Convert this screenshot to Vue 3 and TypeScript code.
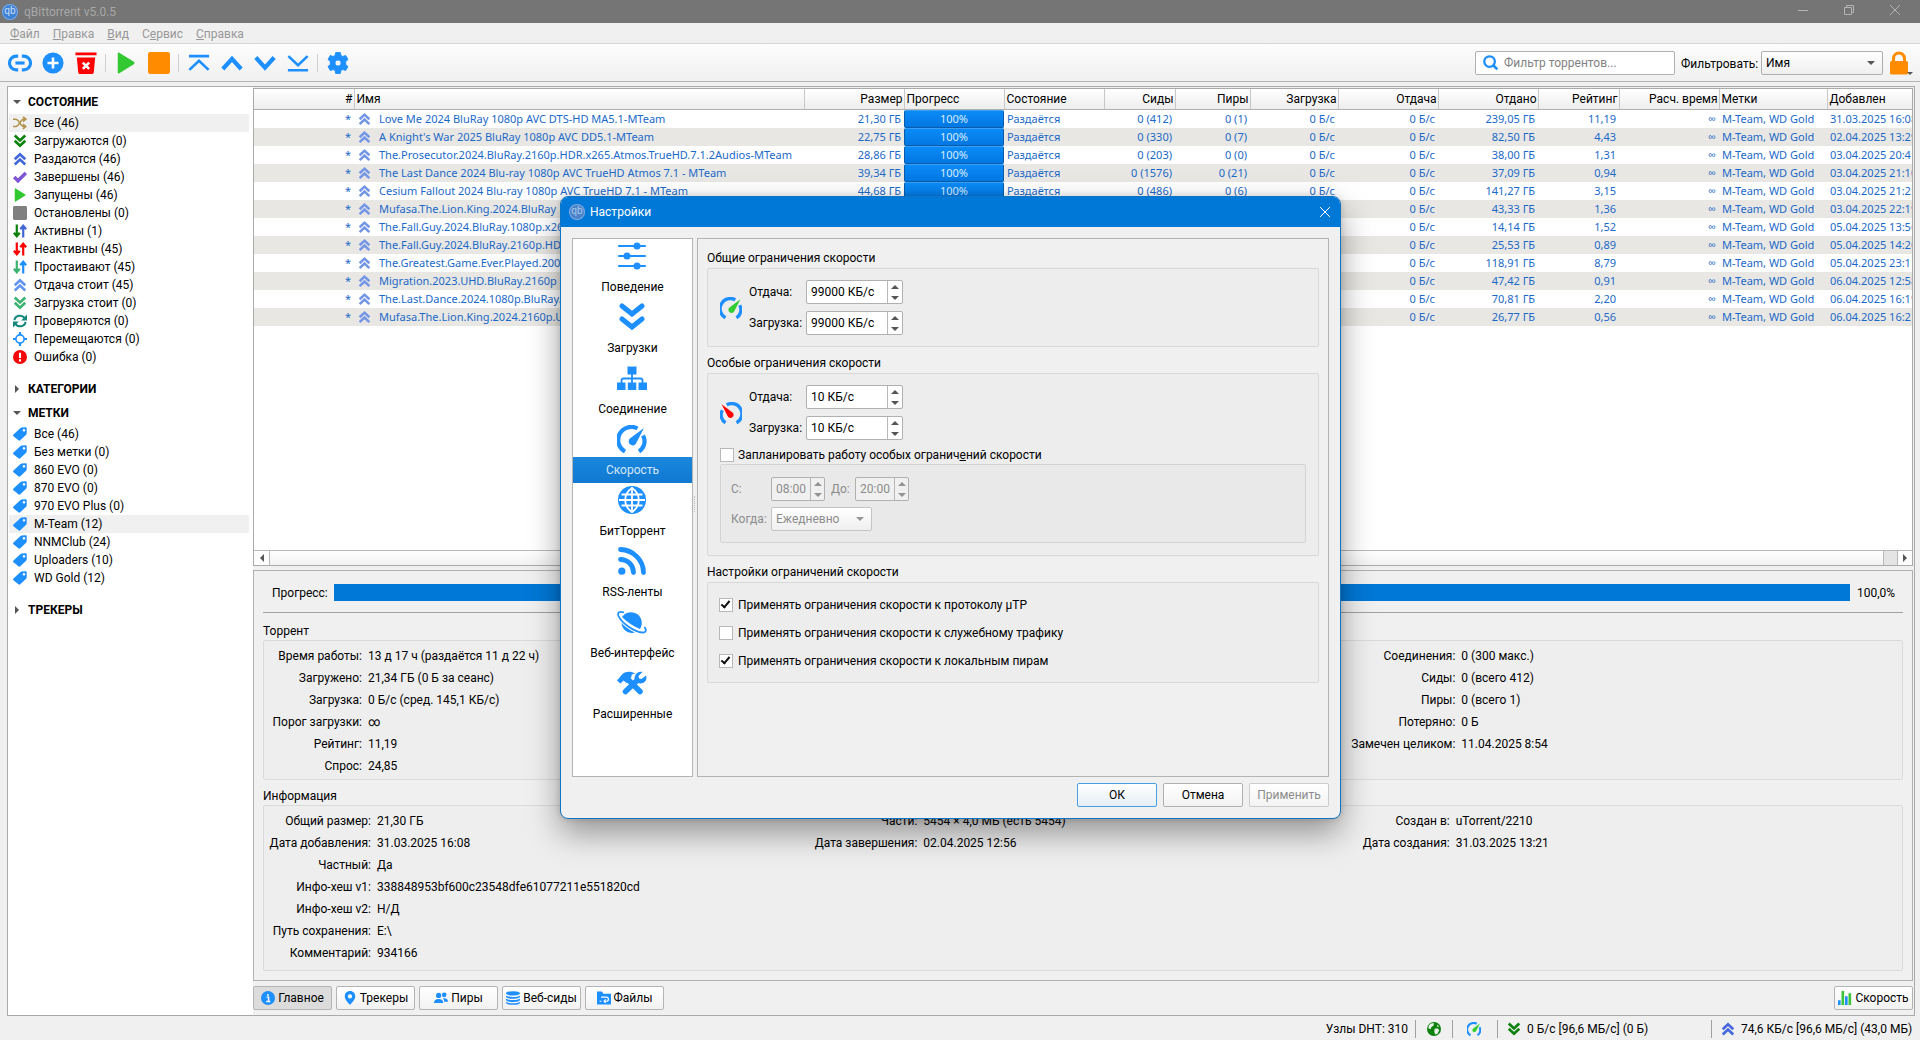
<script setup lang="ts">
import { ref } from 'vue'

interface FilterItem {
  label: string
  icon: string
  color: string
  selected?: boolean
}

interface Torrent {
  name: string
  size: string
  seeds: string
  peers: string
  uploaded: string
  ratio: string
  added: string
}

interface InfoColumn {
  labelWidth: number
  rows: [string, string][]
}

const blue = '#1e8fff'

const statusFilters: FilterItem[] = [
  { label: 'Все (46)', icon: 'shuffle', color: '#b3924b', selected: true },
  { label: 'Загружаются (0)', icon: 'dbl-down', color: '#0c810c' },
  { label: 'Раздаются (46)', icon: 'dbl-up', color: '#4467d8' },
  { label: 'Завершены (46)', icon: 'check', color: '#7d55d6' },
  { label: 'Запущены (46)', icon: 'play', color: '#32c832' },
  { label: 'Остановлены (0)', icon: 'stop', color: '#808080' },
  { label: 'Активны (1)', icon: 'active', color: '#4467d8' },
  { label: 'Неактивны (45)', icon: 'inactive', color: '#ff0000' },
  { label: 'Простаивают (45)', icon: 'stalled', color: '#1e8fff' },
  { label: 'Отдача стоит (45)', icon: 'dbl-up', color: '#6495ed' },
  { label: 'Загрузка стоит (0)', icon: 'dbl-down', color: '#3cb371' },
  { label: 'Проверяются (0)', icon: 'refresh', color: '#14887c' },
  { label: 'Перемещаются (0)', icon: 'target', color: blue },
  { label: 'Ошибка (0)', icon: 'error', color: '#f20808' },
]

const tagFilters: FilterItem[] = [
  'Все (46)', 'Без метки (0)', '860 EVO (0)', '870 EVO (0)', '970 EVO Plus (0)',
  'M-Team (12)', 'NNMClub (24)', 'Uploaders (10)', 'WD Gold (12)',
].map((label) => ({ label, icon: 'tag', color: blue, selected: label === 'M-Team (12)' }))

const columns = [
  { title: '#', width: 100, right: true },
  { title: 'Имя', width: 450 },
  { title: 'Размер', width: 100, right: true },
  { title: 'Прогресс', width: 100 },
  { title: 'Состояние', width: 100 },
  { title: 'Сиды', width: 71, right: true },
  { title: 'Пиры', width: 75, right: true },
  { title: 'Загрузка', width: 88, right: true },
  { title: 'Отдача', width: 100, right: true },
  { title: 'Отдано', width: 100, right: true },
  { title: 'Рейтинг', width: 81, right: true },
  { title: 'Расч. время', width: 100, right: true },
  { title: 'Метки', width: 108 },
  { title: 'Добавлен', width: 120 },
]

const torrents: Torrent[] = [
  { name: 'Love Me 2024 BluRay 1080p AVC DTS-HD MA5.1-MTeam', size: '21,30 ГБ', seeds: '0 (412)', peers: '0 (1)', uploaded: '239,05 ГБ', ratio: '11,19', added: '31.03.2025 16:08' },
  { name: "A Knight's War 2025 BluRay 1080p AVC DD5.1-MTeam", size: '22,75 ГБ', seeds: '0 (330)', peers: '0 (7)', uploaded: '82,50 ГБ', ratio: '4,43', added: '02.04.2025 13:29' },
  { name: 'The.Prosecutor.2024.BluRay.2160p.HDR.x265.Atmos.TrueHD.7.1.2Audios-MTeam', size: '28,86 ГБ', seeds: '0 (203)', peers: '0 (0)', uploaded: '38,00 ГБ', ratio: '1,31', added: '03.04.2025 20:41' },
  { name: 'The Last Dance 2024 Blu-ray 1080p AVC TrueHD Atmos 7.1 - MTeam', size: '39,34 ГБ', seeds: '0 (1576)', peers: '0 (21)', uploaded: '37,09 ГБ', ratio: '0,94', added: '03.04.2025 21:10' },
  { name: 'Cesium Fallout 2024 Blu-ray 1080p AVC TrueHD 7.1 - MTeam', size: '44,68 ГБ', seeds: '0 (486)', peers: '0 (6)', uploaded: '141,27 ГБ', ratio: '3,15', added: '03.04.2025 21:25' },
  { name: 'Mufasa.The.Lion.King.2024.BluRay', size: '', seeds: '', peers: '', uploaded: '43,33 ГБ', ratio: '1,36', added: '03.04.2025 22:19' },
  { name: 'The.Fall.Guy.2024.BluRay.1080p.x265', size: '', seeds: '', peers: '', uploaded: '14,14 ГБ', ratio: '1,52', added: '05.04.2025 13:56' },
  { name: 'The.Fall.Guy.2024.BluRay.2160p.HDR', size: '', seeds: '', peers: '', uploaded: '25,53 ГБ', ratio: '0,89', added: '05.04.2025 14:26' },
  { name: 'The.Greatest.Game.Ever.Played.2005', size: '', seeds: '', peers: '', uploaded: '118,91 ГБ', ratio: '8,79', added: '05.04.2025 23:11' },
  { name: 'Migration.2023.UHD.BluRay.2160p', size: '', seeds: '', peers: '', uploaded: '47,42 ГБ', ratio: '0,91', added: '06.04.2025 12:58' },
  { name: 'The.Last.Dance.2024.1080p.BluRay.', size: '', seeds: '', peers: '', uploaded: '70,81 ГБ', ratio: '2,20', added: '06.04.2025 16:19' },
  { name: 'Mufasa.The.Lion.King.2024.2160p.UHD', size: '', seeds: '', peers: '', uploaded: '26,77 ГБ', ratio: '0,56', added: '06.04.2025 16:21' },
]

const transferInfo: InfoColumn[] = [
  {
    labelWidth: 88,
    rows: [
      ['Время работы:', '13 д 17 ч (раздаётся 11 д 22 ч)'],
      ['Загружено:', '21,34 ГБ (0 Б за сеанс)'],
      ['Загрузка:', '0 Б/с (сред. 145,1 КБ/с)'],
      ['Порог загрузки:', '∞'],
      ['Рейтинг:', '11,19'],
      ['Спрос:', '24,85'],
    ],
  },
  { labelWidth: 104, rows: [] },
  {
    labelWidth: 102,
    rows: [
      ['Соединения:', '0 (300 макс.)'],
      ['Сиды:', '0 (всего 412)'],
      ['Пиры:', '0 (всего 1)'],
      ['Потеряно:', '0 Б'],
      ['Замечен целиком:', '11.04.2025 8:54'],
    ],
  },
]

const generalInfo: InfoColumn[] = [
  {
    labelWidth: 97,
    rows: [
      ['Общий размер:', '21,30 ГБ'],
      ['Дата добавления:', '31.03.2025 16:08'],
      ['Частный:', 'Да'],
      ['Инфо-хеш v1:', '338848953bf600c23548dfe61077211e551820cd'],
      ['Инфо-хеш v2:', 'Н/Д'],
      ['Путь сохранения:', 'E:\\'],
      ['Комментарий:', '934166'],
    ],
  },
  {
    labelWidth: 97,
    rows: [
      ['Части:', '5454 × 4,0 МБ (есть 5454)'],
      ['Дата завершения:', '02.04.2025 12:56'],
    ],
  },
  {
    labelWidth: 83,
    rows: [
      ['Создан в:', 'uTorrent/2210'],
      ['Дата создания:', '31.03.2025 13:21'],
    ],
  },
]

const detailTabs = [
  { label: 'Главное', icon: 'info' },
  { label: 'Трекеры', icon: 'pin' },
  { label: 'Пиры', icon: 'peers' },
  { label: 'Веб-сиды', icon: 'database' },
  { label: 'Файлы', icon: 'folder' },
]

const pages = [
  { label: 'Поведение', icon: 'sliders' },
  { label: 'Загрузки', icon: 'big-down' },
  { label: 'Соединение', icon: 'network' },
  { label: 'Скорость', icon: 'gauge' },
  { label: 'БитТоррент', icon: 'globe' },
  { label: 'RSS-ленты', icon: 'rss' },
  { label: 'Веб-интерфейс', icon: 'planet' },
  { label: 'Расширенные', icon: 'tools' },
]

const activePage = ref('Скорость')
const activeTab = ref('Главное')

const limits = [
  { id: 'normal', title: 'Общие ограничения скорости', upload: ref('99000 КБ/с'), download: ref('99000 КБ/с') },
  { id: 'alt', title: 'Особые ограничения скорости', upload: ref('10 КБ/с'), download: ref('10 КБ/с') },
]

const scheduled = ref(false)
const applyUtp = ref(true)
const applyOverhead = ref(false)
const applyLan = ref(true)
</script>

<template>
  <div class="app">
    <svg class="sprite" aria-hidden="true">
      <symbol id="dbl-up" viewBox="0 0 24 24"><path d="M3 12.500l9-8.500 9 8.500M3 21.500l9-8.500 9 8.500" fill="none" stroke="currentColor" stroke-width="4.600" /></symbol>
      <symbol id="dbl-down" viewBox="0 0 24 24"><path d="M3 2.500l9 8.500 9-8.500M3 11.500l9 8.500 9-8.500" fill="none" stroke="currentColor" stroke-width="4.600" /></symbol>
      <symbol id="big-down" viewBox="0 0 28 28"><path d="M4 3l10 8 10-8M4 16l10 8 10-8" fill="none" stroke="currentColor" stroke-width="5" stroke-linecap="round" /></symbol>
      <symbol id="shuffle" viewBox="0 0 24 24"><path d="M0 5.500h5c5 0 8 12.500 13 12.500h2M0 18h5c5 0 8-12.500 13-12.500h2M17 1.500l5 4-5 4M17 14l5 4-5 4" fill="none" stroke="currentColor" stroke-width="2.800" /></symbol>
      <symbol id="check" viewBox="0 0 24 24"><path d="M2 12l6.500 6.500L22 5" fill="none" stroke="currentColor" stroke-width="6" /></symbol>
      <symbol id="play" viewBox="0 0 24 24"><path d="M3 1.500c0-1 .8-1.300 1.600-.8l16 10c.9.600.9 2 0 2.600l-16 10c-.8.500-1.600.2-1.600-.8z" fill="currentColor" /></symbol>
      <symbol id="stop" viewBox="0 0 24 24"><rect x="0" y="0" width="24" height="24" rx="2.500" fill="currentColor" /></symbol>
      <symbol id="active" viewBox="0 0 24 24"><path d="M6.500 1v20M1.500 15l5 6 5-6" fill="none" stroke="#0c810c" stroke-width="3.800" /><path d="M17.500 23V3M12.500 9l5-6 5 6" fill="none" stroke="currentColor" stroke-width="3.800" /></symbol>
      <symbol id="inactive" viewBox="0 0 24 24"><path d="M6.500 1v20M1.500 15l5 6 5-6M17.500 23V3M12.500 9l5-6 5 6" fill="none" stroke="currentColor" stroke-width="3.800" /></symbol>
      <symbol id="stalled" viewBox="0 0 24 24"><path d="M6.500 1v20M1.500 15l5 6 5-6" fill="none" stroke="#3cb371" stroke-width="3.800" /><path d="M17.500 23V3M12.500 9l5-6 5 6" fill="none" stroke="currentColor" stroke-width="3.800" /></symbol>
      <symbol id="refresh" viewBox="0 0 24 24"><path d="M2.500 10.500A9.500 8.500 0 0 1 20 7M21.500 13.500A9.500 8.500 0 0 1 4 17" fill="none" stroke="currentColor" stroke-width="3.500" /><path d="M24 1v10h-10zM0 23V13h10z" fill="currentColor" /></symbol>
      <symbol id="target" viewBox="0 0 24 24"><circle cx="12" cy="12" r="7" fill="none" stroke="currentColor" stroke-width="2.800" /><path d="M12 0v5M12 19v5M0 12h5M19 12h5" stroke="currentColor" stroke-width="3.800" /></symbol>
      <symbol id="error" viewBox="0 0 24 24"><circle cx="12" cy="12" r="12" fill="currentColor" /><path d="M12 4.500v9M12 16v3.500" stroke="#fff" stroke-width="3.600" /></symbol>
      <symbol id="tag" viewBox="0 0 24 24"><path d="M23.500 2.500v8c0 1-.4 2-1 2.700L12.500 22.700c-.9.900-2.300.9-3.200 0L.8 16c-.9-.9-.9-2.300 0-3.200L12 2.500C13 1.500 14 1 15 .8L21.500.5c1.200 0 2 .8 2 2zM18.800 3.500a2.200 2.200 0 1 0 .1 0z" fill="currentColor" fill-rule="evenodd" /></symbol>
      <symbol id="link" viewBox="0 0 24 24"><path d="M10 4.500H8a7.500 7.500 0 0 0 0 15h2M14 4.500h2a7.500 7.500 0 0 1 0 15h-2" fill="none" stroke="currentColor" stroke-width="3.400" /><path d="M7 12h10" stroke="currentColor" stroke-width="3.400" /></symbol>
      <symbol id="plus" viewBox="0 0 24 24"><circle cx="12" cy="12" r="11.500" fill="currentColor" /><path d="M12 6v12M6 12h12" stroke="#fff" stroke-width="2.800" /></symbol>
      <symbol id="trash" viewBox="0 0 24 24"><path d="M.5.500h23v3H.5zM2 6h20l-1.500 16c-.1 1.200-1 2-2 2h-13c-1 0-1.900-.8-2-2z" fill="currentColor" /><path d="M8.500 11.500l7 7M15.500 11.500l-7 7" stroke="#fff" stroke-width="2.800" /></symbol>
      <symbol id="top" viewBox="0 0 24 24"><path d="M1 4.500h22M1.500 19.500L12 9.500l10.500 10" fill="none" stroke="currentColor" stroke-width="2.800" /></symbol>
      <symbol id="up" viewBox="0 0 24 24"><path d="M2 18.500L12 7.500l10 11" fill="none" stroke="currentColor" stroke-width="4.600" /></symbol>
      <symbol id="down" viewBox="0 0 24 24"><path d="M2 6l10 11L22 6" fill="none" stroke="currentColor" stroke-width="4.600" /></symbol>
      <symbol id="bottom" viewBox="0 0 24 24"><path d="M1 20h22M1.500 4.500l10.500 10 10.500-10" fill="none" stroke="currentColor" stroke-width="2.800" /></symbol>
      <symbol id="gear" viewBox="0 0 24 24"><path fill="currentColor" fill-rule="evenodd" d="M9.500.5h5l.7 3.300 2 1.100 3.200-1.100 2.500 4.300-2.500 2.300v3.200l2.500 2.300-2.500 4.300-3.200-1.100-2 1.100-.7 3.300h-5l-.7-3.300-2-1.100-3.200 1.100-2.500-4.300 2.500-2.300v-3.200L1.100 8.100l2.500-4.300 3.200 1.100 2-1.100zM12 8.700a3.300 3.300 0 1 0 .1 0z" stroke="currentColor" stroke-width="1" stroke-linejoin="round" /></symbol>
      <symbol id="search" viewBox="0 0 24 24"><circle cx="10.500" cy="10.500" r="8.500" fill="none" stroke="currentColor" stroke-width="3.600" /><path d="M16 16l7 7" stroke="currentColor" stroke-width="4.200" /></symbol>
      <symbol id="lock" viewBox="0 0 20 24"><path d="M4.500 11V7.500a5.500 5.500 0 0 1 11 0V11" fill="none" stroke="currentColor" stroke-width="3" /><rect x="1" y="10" width="18" height="13.500" rx="1.500" fill="currentColor" /></symbol>
      <symbol id="sliders" viewBox="0 0 28 28"><path d="M1 4h26M1 14h26M1 24h26" stroke="currentColor" stroke-width="2.200" stroke-linecap="round" /><circle cx="19" cy="4" r="3.500" fill="currentColor" /><circle cx="9" cy="14" r="3.500" fill="currentColor" /><circle cx="19" cy="24" r="3.500" fill="currentColor" /></symbol>
      <symbol id="network" viewBox="0 0 30 28"><path d="M10.500 2.500h9v8h-9zM0 18.500h8.500v7.500H0zM10.800 18.500h8.500v7.500h-8.500zM21.500 18.500H30v7.500h-8.500z" fill="currentColor" /><path d="M15 10v9M4.500 19v-2.500a2 2 0 0 1 2-2h17a2 2 0 0 1 2 2V19" fill="none" stroke="currentColor" stroke-width="1.800" /></symbol>
      <symbol id="gauge" viewBox="0 0 28 28"><path d="M7 26.500A12 12 0 0 1 19.500 3.500M25 10.500a12 12 0 0 1-4 16" fill="none" stroke="currentColor" stroke-width="4.200" /><path d="M26 3L18.500 17.500a4 4 0 1 1-6-4.500z" fill="currentColor" /></symbol>
      <symbol id="gauge-green" viewBox="0 0 28 28"><path d="M7 26.500A12 12 0 0 1 19.500 3.500M25 10.500a12 12 0 0 1-4 16" fill="none" stroke="#1e8fff" stroke-width="4.200" /><path d="M26 3L18.500 17.500a4 4 0 1 1-6-4.500z" fill="#32cd32" /></symbol>
      <symbol id="gauge-red" viewBox="0 0 28 28"><path d="M21 26.500A12 12 0 0 0 8.500 3.500M3 10.500a12 12 0 0 0 4 16" fill="none" stroke="#1e8fff" stroke-width="4.200" /><path d="M2 3l7.500 14.500a4 4 0 1 0 6-4.500z" fill="#ff0000" /></symbol>
      <symbol id="globe" viewBox="0 0 28 28"><circle cx="14" cy="14" r="14" fill="currentColor" /><path d="M14 1v26M3.500 8.500h21M3.500 19.500h21M1 14h26M14 2c-9 6-9 18 0 24M14 2c9 6 9 18 0 24" fill="none" stroke="#fff" stroke-width="1.800" /></symbol>
      <symbol id="rss" viewBox="0 0 28 28"><circle cx="3.800" cy="24.200" r="3.600" fill="currentColor" /><path d="M2.500 2.500A23.500 23.500 0 0 1 25.500 25.500M2.500 12.500A13 13 0 0 1 15.500 25.500" fill="none" stroke="currentColor" stroke-width="4.800" stroke-linecap="round" /></symbol>
      <symbol id="planet" viewBox="0 0 30 28"><path d="M5 9A10.500 10.500 0 1 1 23 21Q13 17 5 9zM4.500 15Q10 21 18 24.500A10.500 10.500 0 0 1 4.500 15z" fill="currentColor" /><path d="M7 4.500C3 3 0 4 1.500 8c3 7 16 16 24 16.500 4 0 4-2.500 2-5.500" fill="none" stroke="currentColor" stroke-width="1.800" /></symbol>
      <symbol id="tools" viewBox="0 0 30 28"><path d="M8.500 22.500L20 11.500" stroke="currentColor" stroke-width="5.500" stroke-linecap="round" /><path d="M11.500 11L23 22.500" stroke="currentColor" stroke-width="5.500" stroke-linecap="round" /><path d="M0 11.500L5.500 5C9 2 14 2 18 4.500c-3 .5-4 1.500-3.500 3.500l-5 6-3-2.500-3 3z" fill="currentColor" /><path d="M25.500 3l-4 4 .5 2.500 2.500.5L29 6.500c1.500 4-1 8-5.500 8-5 0-7-4-5.500-7.500 1-3 4-5 7.500-4z" fill="currentColor" /></symbol>
      <symbol id="info" viewBox="0 0 24 24"><circle cx="12" cy="12" r="12" fill="currentColor" /><path d="M9.500 10.500H13v7.500M9 18h7M12 5v3.500" fill="none" stroke="#fff" stroke-width="2.400" /></symbol>
      <symbol id="pin" viewBox="0 0 24 24"><path d="M12 0C6.500 0 3 4 3 9c0 6 6 11 9 15 3-4 9-9 9-15 0-5-3.500-9-9-9zm0 5.500a3.700 3.700 0 1 1-.1 0z" fill="currentColor" fill-rule="evenodd" /></symbol>
      <symbol id="peers" viewBox="0 0 24 24"><circle cx="8" cy="7.500" r="4.500" fill="currentColor" /><circle cx="17.500" cy="6.500" r="4" fill="currentColor" /><path d="M0 20.500c0-5 3-7 8-7s8 2 8 7zM15 12.500c6-1 9 1.500 9 6h-6.500c0-2.500-.8-4.500-2.500-6z" fill="currentColor" /></symbol>
      <symbol id="database" viewBox="0 0 24 24"><path d="M0 4c0-5 24-5 24 0s-24 5-24 0zM0 7.500c4 3.500 20 3.500 24 0V10c-1 4.500-23 4.500-24 0zM0 13c4 3.500 20 3.500 24 0v2.500c-1 4.500-23 4.500-24 0zM0 18.500c4 3.500 20 3.500 24 0V20c-1 5-23 5-24 0z" fill="currentColor" /></symbol>
      <symbol id="folder" viewBox="0 0 24 24"><path d="M0 1h8.500l2.500 3.500h13V23H0z" fill="currentColor" /><path d="M7 10.500h9a3.500 3.500 0 0 1 0 7h-3.500M15 14.500l-3 3 3 3M4.500 17.500h3" fill="none" stroke="#fff" stroke-width="2" /></symbol>
      <symbol id="bars" viewBox="0 0 24 24"><path d="M0 16h4.500v8H0zM12 9h4.500v15H12z" fill="#1e8fff" /><path d="M6 0h4.500v24H6zM18 4h4.500v20H18z" fill="#3ac43a" /></symbol>
      <symbol id="earth" viewBox="0 0 24 24"><circle cx="12" cy="12" r="12" fill="#0c810c" /><path d="M4 4.500c3-2.500 7-2.500 8-2l-1 4-3.500 2-1 3.500-4-1c0-3 .5-5 1.500-6.500zM13 11.500l5-1 3 3.500-3 6-4 1.500-1.500-5zM17 4l4 4-3 .5z" fill="#e8f2e8" /></symbol>
    </svg>

    <header class="titlebar">
      <span class="logo">qb</span>
      <span class="title">qBittorrent v5.0.5</span>
      <div class="window-buttons">
        <button type="button" aria-label="Свернуть"><svg viewBox="0 0 10 10"><path d="M0 5.500h10" /></svg></button>
        <button type="button" aria-label="Восстановить"><svg viewBox="0 0 10 10"><path d="M.5 2.500h7v7h-7zM2.500 2.500v-2h7v7h-2" /></svg></button>
        <button type="button" aria-label="Закрыть"><svg viewBox="0 0 10 10"><path d="M0 0l10 10M10 0L0 10" /></svg></button>
      </div>
    </header>

    <nav class="menubar">
      <a href="#"><u>Ф</u>айл</a>
      <a href="#"><u>П</u>равка</a>
      <a href="#"><u>В</u>ид</a>
      <a href="#">С<u>е</u>рвис</a>
      <a href="#"><u>С</u>правка</a>
    </nav>

    <div class="toolbar">
      <button type="button" class="tool" aria-label="Добавить ссылку"><svg class="wide"><use href="#link" /></svg></button>
      <button type="button" class="tool" aria-label="Добавить торрент"><svg><use href="#plus" /></svg></button>
      <button type="button" class="tool red" aria-label="Удалить"><svg><use href="#trash" /></svg></button>
      <span class="tool-sep"></span>
      <button type="button" class="tool green" aria-label="Запустить"><svg><use href="#play" /></svg></button>
      <button type="button" class="tool orange" aria-label="Остановить"><svg><use href="#stop" /></svg></button>
      <span class="tool-sep"></span>
      <button type="button" class="tool" aria-label="В начало очереди"><svg><use href="#top" /></svg></button>
      <button type="button" class="tool" aria-label="Выше"><svg><use href="#up" /></svg></button>
      <button type="button" class="tool" aria-label="Ниже"><svg><use href="#down" /></svg></button>
      <button type="button" class="tool" aria-label="В конец очереди"><svg><use href="#bottom" /></svg></button>
      <span class="tool-sep"></span>
      <button type="button" class="tool" aria-label="Настройки"><svg><use href="#gear" /></svg></button>
      <div class="search">
        <svg><use href="#search" /></svg>
        <input type="text" placeholder="Фильтр торрентов..." aria-label="Фильтр торрентов" />
      </div>
      <label for="filter-by" class="filter-label">Фильтровать:</label>
      <div class="select filter-select">
        <select id="filter-by"><option>Имя</option></select>
      </div>
      <button type="button" class="lock" aria-label="Блокировка"><svg><use href="#lock" /></svg></button>
    </div>

    <main class="main">
      <aside class="sidebar">
        <h2 class="open">СОСТОЯНИЕ</h2>
        <ul>
          <li v-for="item in statusFilters" :key="item.label" :class="{ selected: item.selected }">
            <svg :style="{ color: item.color }"><use :href="'#' + item.icon" /></svg>{{ item.label }}
          </li>
        </ul>
        <h2>КАТЕГОРИИ</h2>
        <h2 class="open">МЕТКИ</h2>
        <ul>
          <li v-for="item in tagFilters" :key="item.label" :class="{ selected: item.selected }">
            <svg :style="{ color: item.color }"><use :href="'#' + item.icon" /></svg>{{ item.label }}
          </li>
        </ul>
        <h2>ТРЕКЕРЫ</h2>
      </aside>

      <div class="content">
        <div class="list-frame">
          <div class="list-scroll">
            <table>
              <colgroup>
                <col v-for="col in columns" :key="col.title" :style="{ width: col.width + 'px' }" />
              </colgroup>
              <thead>
                <tr><th v-for="col in columns" :key="col.title" :class="{ right: col.right }">{{ col.title }}</th></tr>
              </thead>
              <tbody>
                <tr v-for="t in torrents" :key="t.name">
                  <td class="right star">*</td>
                  <td><span class="name"><svg><use href="#dbl-up" /></svg><span>{{ t.name }}</span></span></td>
                  <td class="right">{{ t.size }}</td>
                  <td class="progress-cell"><div>100%</div></td>
                  <td>Раздаётся</td>
                  <td class="right">{{ t.seeds }}</td>
                  <td class="right">{{ t.peers }}</td>
                  <td class="right">0 Б/с</td>
                  <td class="right">0 Б/с</td>
                  <td class="right">{{ t.uploaded }}</td>
                  <td class="right">{{ t.ratio }}</td>
                  <td class="right">∞</td>
                  <td>M-Team, WD Gold</td>
                  <td class="added">{{ t.added }}</td>
                </tr>
              </tbody>
            </table>
          </div>
          <div class="hscroll">
            <button type="button" class="arrow-left" aria-label="Влево"></button>
            <div class="track"></div>
            <button type="button" class="arrow-right" aria-label="Вправо"></button>
          </div>
        </div>

        <section class="details">
          <div class="progress-row">
            <span>Прогресс:</span>
            <div class="progress-bar"></div>
            <span class="percent">100,0%</span>
          </div>
          <h3>Торрент</h3>
          <div class="info-box">
            <dl v-for="(col, i) in transferInfo" :key="i" :style="{ '--label': col.labelWidth + 'px' }">
              <template v-for="row in col.rows" :key="row[0]"><dt>{{ row[0] }}</dt><dd>{{ row[1] }}</dd></template>
            </dl>
          </div>
          <h3>Информация</h3>
          <div class="info-box general">
            <dl v-for="(col, i) in generalInfo" :key="i" :style="{ '--label': col.labelWidth + 'px' }">
              <template v-for="row in col.rows" :key="row[0]"><dt>{{ row[0] }}</dt><dd>{{ row[1] }}</dd></template>
            </dl>
          </div>
        </section>

        <div class="tabs">
          <button
            v-for="tab in detailTabs"
            :key="tab.label"
            type="button"
            class="tab"
            :class="{ active: tab.label === activeTab }"
            @click="activeTab = tab.label"
          >
            <svg><use :href="'#' + tab.icon" /></svg>{{ tab.label }}
          </button>
          <button type="button" class="tab speed"><svg><use href="#bars" /></svg>Скорость</button>
        </div>
      </div>
    </main>

    <footer class="statusbar">
      <span class="cell dht">Узлы DHT: 310</span>
      <span class="cell icon-cell"><svg><use href="#earth" /></svg></span>
      <span class="cell gauge-cell"><svg><use href="#gauge-green" /></svg></span>
      <span class="cell rate"><svg class="dl"><use href="#dbl-down" /></svg>0 Б/с [96,6 МБ/с] (0 Б)</span>
      <span class="cell rate last"><svg class="ul"><use href="#dbl-up" /></svg>74,6 КБ/с [96,6 МБ/с] (43,0 МБ)</span>
    </footer>

    <div class="dialog" role="dialog" aria-labelledby="dialog-title">
      <div class="dialog-title">
        <span class="logo pale">qb</span>
        <span id="dialog-title">Настройки</span>
        <button type="button" aria-label="Закрыть"><svg viewBox="0 0 10 10"><path d="M0 0l10 10M10 0L0 10" /></svg></button>
      </div>
      <div class="dialog-body">
        <nav class="pages">
          <button
            v-for="page in pages"
            :key="page.label"
            type="button"
            :class="{ active: page.label === activePage }"
            @click="activePage = page.label"
          >
            <svg><use :href="'#' + page.icon" /></svg>
            <span>{{ page.label }}</span>
          </button>
        </nav>
        <div class="grip"></div>
        <div class="page">
          <template v-for="limit in limits" :key="limit.id">
            <h3>{{ limit.title }}</h3>
            <div class="group" :class="limit.id">
              <div class="limit">
                <svg><use :href="limit.id === 'alt' ? '#gauge-red' : '#gauge-green'" /></svg>
                <div class="limit-grid">
                  <label :for="limit.id + '-up'">Отдача:</label>
                  <div class="spin"><input :id="limit.id + '-up'" v-model="limit.upload.value" type="text" /><span><button type="button" aria-label="Больше"></button><button type="button" aria-label="Меньше"></button></span></div>
                  <label :for="limit.id + '-down'">Загрузка:</label>
                  <div class="spin"><input :id="limit.id + '-down'" v-model="limit.download.value" type="text" /><span><button type="button" aria-label="Больше"></button><button type="button" aria-label="Меньше"></button></span></div>
                </div>
              </div>
              <template v-if="limit.id === 'alt'">
                <label class="check schedule-check"><input v-model="scheduled" type="checkbox" /><span>Запланировать работу особых огранич<u>е</u>ний скорости</span></label>
                <div class="schedule">
                  <div class="schedule-row">
                    <label for="from">С:</label>
                    <div class="spin time"><input id="from" type="text" value="08:00" disabled /><span><button type="button" disabled aria-label="Больше"></button><button type="button" disabled aria-label="Меньше"></button></span></div>
                    <label for="to" class="to">До:</label>
                    <div class="spin time"><input id="to" type="text" value="20:00" disabled /><span><button type="button" disabled aria-label="Больше"></button><button type="button" disabled aria-label="Меньше"></button></span></div>
                  </div>
                  <div class="schedule-row">
                    <label for="when">Когда:</label>
                    <div class="select when"><select id="when" disabled><option>Ежедневно</option></select></div>
                  </div>
                </div>
              </template>
            </div>
          </template>
          <h3>Настройки ограничений скорости</h3>
          <div class="group options">
            <label class="check"><input v-model="applyUtp" type="checkbox" /><span>Применять ограничения скорости к протоколу μTP</span></label>
            <label class="check"><input v-model="applyOverhead" type="checkbox" /><span>Применять ограничения скорости к служебному трафику</span></label>
            <label class="check"><input v-model="applyLan" type="checkbox" /><span>Применять ограничения скорости к локальным пирам</span></label>
          </div>
        </div>
      </div>
      <div class="dialog-buttons">
        <button type="button" class="default">ОК</button>
        <button type="button">Отмена</button>
        <button type="button" disabled>Применить</button>
      </div>
    </div>
  </div>
</template>

<style>
body {
  margin: 0;
  background: #f0f0f0;
}
</style>

<style scoped>
* {
  box-sizing: border-box;
}

.app {
  position: relative;
  display: flex;
  flex-direction: column;
  min-height: 100vh;
  overflow: hidden;
  background: #f0f0f0;
  color: #000;
  font: 12px/18px Roboto, "Noto Sans", sans-serif;
  white-space: nowrap;
}

button,
input,
select {
  margin: 0;
  padding: 0;
  border: 0;
  background: none;
  color: inherit;
  font: inherit;
  outline: none;
}

h2,
h3,
ul,
dl,
dd {
  margin: 0;
  padding: 0;
  font-weight: normal;
  font-size: 12px;
}

.sprite {
  display: none;
}

svg {
  flex: none;
  display: block;
}

/* Title bar and menu */
.titlebar {
  display: flex;
  align-items: center;
  height: 23px;
  padding-left: 2px;
  background: #757575;
  color: #a8a8a8;
}

.logo {
  width: 16px;
  height: 16px;
  border-radius: 8px;
  background: #3f82d4;
  box-shadow: inset 0 0 0 1px #7aa9e2;
  color: #c9dff8;
  font-size: 10px;
  line-height: 14px;
  text-align: center;
}

.logo.pale {
  background: #4b84c9;
  color: #a9c8ec;
}

.title {
  margin-left: 6px;
}

.window-buttons {
  display: flex;
  margin-left: auto;
  padding-right: 2px;
}

.window-buttons button {
  display: flex;
  justify-content: center;
  width: 46px;
  padding-bottom: 3px;
}

.window-buttons svg,
.dialog-title svg {
  width: 10px;
  height: 10px;
  fill: none;
  stroke: #b4b4b4;
  overflow: visible;
}

.menubar {
  display: flex;
  gap: 13px;
  height: 21px;
  padding: 2px 10px 0;
  border-bottom: 1px solid #d6d6d6;
}

.menubar a {
  color: #989898;
  text-decoration: none;
}

/* Toolbar */
.toolbar {
  display: flex;
  align-items: center;
  height: 38px;
  padding: 0 5px 0 3px;
  border-bottom: 1px solid #b4b4b4;
  background: linear-gradient(#fdfdfd, #f0f0f0);
}

.tool {
  display: flex;
  justify-content: center;
  width: 33px;
  color: #1e8fff;
}

.tool svg {
  width: 22px;
  height: 22px;
}

.tool .wide {
  width: 24px;
}

.tool.red {
  color: #ff0000;
}

.tool.green {
  color: #32c832;
}

.tool.orange {
  color: #ff8c00;
}

.tool-sep {
  width: 1px;
  height: 18px;
  margin: 0 3px;
  background: #d0d0d0;
}

.search {
  display: flex;
  align-items: center;
  width: 200px;
  height: 24px;
  margin-left: auto;
  padding-left: 7px;
  border: 1px solid #b0b0b0;
  border-radius: 2px;
  background: #fff;
}

.search svg {
  width: 15px;
  height: 15px;
  color: #1e8fff;
}

.search input {
  flex: 1;
  min-width: 0;
  padding-left: 6px;
}

.search input::placeholder {
  color: #828282;
  opacity: 1;
}

.filter-label {
  width: 86px;
  padding: 2px 0 0 6px;
}

.select {
  position: relative;
  display: flex;
  border: 1px solid #aeaeae;
  border-radius: 2px;
  background: linear-gradient(#fff, #efefef);
}

.select::after {
  content: "";
  position: absolute;
  top: 9px;
  right: 7px;
  border: 4px solid transparent;
  border-top: 4px solid #555;
  border-bottom: 0;
}

.select select {
  width: 100%;
  padding: 0 4px;
  appearance: none;
}

.filter-select {
  width: 122px;
  height: 24px;
}

.lock {
  position: relative;
  margin-left: 6px;
  width: 26px;
  color: #ff8c00;
}

.lock svg {
  width: 20px;
  height: 24px;
}

.lock::after {
  content: "";
  position: absolute;
  right: 2px;
  bottom: 0;
  border: 3px solid transparent;
  border-top-color: #555;
  border-bottom: 0;
}

/* Main area */
.main {
  flex: 1;
  display: flex;
  margin: 4px 5px 0 7px;
  border: 1px solid #aaa;
}

.sidebar {
  flex: none;
  width: 245px;
  padding: 3px 4px 0 0;
  background: #fff;
}

.sidebar h2 {
  display: flex;
  align-items: center;
  height: 24px;
  padding-left: 5px;
  font-weight: bold;
  line-height: 22px;
}

.sidebar h2::before {
  content: "";
  margin: 0 9px 0 2px;
  border: 4px solid transparent;
  border-left-color: #555;
  border-right: 0;
}

.sidebar h2.open::before {
  margin: 0 7px 0 0;
  border: 4px solid transparent;
  border-top-color: #555;
  border-bottom: 0;
}

.sidebar ul {
  padding-bottom: 11px;
  list-style: none;
}

.sidebar li {
  display: flex;
  align-items: center;
  gap: 7px;
  height: 18px;
  margin-left: 1px;
  padding-left: 4px;
  line-height: 20px;
}

.sidebar li.selected {
  background: #f0f0f0;
}

.sidebar li svg {
  width: 14px;
  height: 14px;
}

.content {
  flex: 1;
  min-width: 0;
  display: flex;
  flex-direction: column;
  padding: 1px 1px 0 0;
}

.list-frame {
  flex: 1;
  min-height: 0;
  display: flex;
  flex-direction: column;
  border: 1px solid #aaa;
  background: #fff;
}

.list-scroll {
  flex: 1;
  overflow: hidden;
}

table {
  width: 1593px;
  table-layout: fixed;
  border-collapse: collapse;
}

th {
  height: 20px;
  padding: 2px 2px 0;
  border-right: 1px solid #c8c8c8;
  border-bottom: 1px solid #b0b0b0;
  background: linear-gradient(#fff, #ededed);
  font-weight: normal;
  text-align: left;
  line-height: 17px;
}

th.right,
td.right {
  text-align: right;
}

th.right {
  padding-right: 1px;
}

td {
  height: 18px;
  padding: 0 3px;
  color: #1a69c8;
  font-family: "Noto Sans", "Open Sans", sans-serif;
  font-size: 11px;
  line-height: 18px;
  overflow: hidden;
}

tbody tr:nth-child(even) {
  background: #e9e7e3;
}

.name {
  display: flex;
  align-items: center;
  gap: 8px;
}

.name svg {
  width: 13px;
  height: 14px;
  margin-left: 1px;
  color: #7396e6;
}

.progress-cell {
  padding: 0;
}

.progress-cell div {
  height: 18px;
  border: 1px solid #0a5cab;
  border-top-color: #3a9ff5;
  border-radius: 2px;
  background: linear-gradient(#0b8bf8, #0277e2);
  color: #d8ecff;
  text-align: center;
  line-height: 16px;
}

.hscroll {
  display: flex;
  height: 15px;
  border-top: 1px solid #b8b8b8;
  background: #e4e4e4;
}

.hscroll button {
  display: flex;
  align-items: center;
  justify-content: center;
  width: 15px;
  background: #fcfcfc;
}

.hscroll button::before {
  content: "";
  border: 4px solid transparent;
}

.hscroll .arrow-left::before {
  border-right-color: #555;
  border-left: 0;
}

.hscroll .arrow-right::before {
  border-left-color: #555;
  border-right: 0;
}

.hscroll .arrow-right {
  border-left: 1px solid #b8b8b8;
}

.track {
  flex: 1;
  margin-right: 13px;
  border: 1px solid #b8b8b8;
  border-width: 0 1px;
  background: linear-gradient(#fff, #f2f2f2);
}

/* Details */
.details {
  margin-top: 4px;
  padding: 0 9px 9px;
  border: 1px solid #b0b0b0;
}

.progress-row {
  display: flex;
  align-items: center;
  height: 42px;
  margin-bottom: 9px;
  padding: 2px 8px 0 9px;
  border-bottom: 1px solid #a0a0a0;
}

.progress-row span:first-child {
  width: 62px;
}

.progress-row .percent {
  width: 38px;
}

.progress-bar {
  flex: 1;
  height: 17px;
  margin-right: 7px;
  background: #0078d7;
}

.info-box {
  display: flex;
  gap: 6px;
  min-height: 140px;
  margin-bottom: 7px;
  padding: 4px 9px 1px 10px;
  border: 1px solid #dadada;
  border-radius: 2px;
  background: #eee;
}

.info-box.general {
  min-height: 166px;
  margin-bottom: 0;
}

.info-box dl {
  flex: 1 1 calc(var(--label) + 6px);
  display: grid;
  grid-template-columns: var(--label) 1fr;
  grid-auto-rows: 22px;
  column-gap: 6px;
  line-height: 22px;
}

.info-box dt {
  justify-self: end;
}

.tabs {
  display: flex;
  gap: 4px;
  padding: 5px 0;
}

.tab {
  display: flex;
  align-items: center;
  justify-content: center;
  gap: 3px;
  width: 79px;
  height: 24px;
  border: 1px solid #b4b4b4;
  border-radius: 2px;
  background: linear-gradient(#fff, #f2f2f2);
}

.tab.active {
  background: #dcdcdc;
}

.tab svg {
  width: 14px;
  height: 14px;
  color: #1e8fff;
}

.tab.speed {
  margin-left: auto;
}

/* Status bar */
.statusbar {
  display: flex;
  justify-content: flex-end;
  align-items: center;
  height: 24px;
  padding: 2px 6px 0 0;
}

.cell {
  display: flex;
  align-items: center;
  gap: 6px;
  height: 18px;
  border-left: 1px solid #a0a0a0;
}

.cell svg {
  width: 14px;
  height: 14px;
}

.dht {
  border-left: 0;
  padding-right: 7px;
}

.icon-cell {
  justify-content: center;
  width: 37px;
}

.gauge-cell {
  justify-content: center;
  width: 45px;
  padding-right: 2px;
}

.rate {
  width: 214px;
  padding-left: 9px;
}

.rate.last {
  width: 203px;
}

.dl {
  color: #0c810c;
}

.ul {
  color: #4467e0;
}

/* Settings dialog */
.dialog {
  position: absolute;
  top: 196px;
  left: calc(50% - 400px);
  width: 781px;
  border: 1px solid #0f74c4;
  border-radius: 8px;
  background: #f0f0f0;
  box-shadow: 0 14px 32px rgba(0, 0, 0, 0.38), 0 0 6px rgba(0, 0, 0, 0.14);
  overflow: hidden;
}

.dialog-title {
  display: flex;
  align-items: center;
  gap: 5px;
  height: 30px;
  padding: 0 10px 0 8px;
  background: #0078d7;
  color: #fff;
}

.dialog-title button {
  margin-left: auto;
}

.dialog-title svg {
  stroke: #fff;
}

.dialog-body {
  display: flex;
  padding: 11px 11px 0 11px;
}

.pages {
  display: flex;
  flex-direction: column;
  width: 121px;
  min-height: 539px;
  border: 1px solid #b4b4b4;
  background: #fff;
}

.pages button {
  display: flex;
  flex-direction: column;
  align-items: center;
  height: 61px;
}

.pages svg {
  width: 30px;
  height: 28px;
  margin: 3px 1px 4px 0;
  color: #1e8fff;
}

.pages span {
  align-self: stretch;
  height: 26px;
  line-height: 26px;
}

.pages .active span {
  background: linear-gradient(#1a86dc, #1079d2);
  color: #d4e8fa;
}

.grip {
  width: 1px;
  height: 16px;
  margin: 258px 2px 0 1px;
  border-left: 1px dotted #bbb;
}

.page {
  flex: 1;
  padding: 9px 9px 0;
  border: 1px solid #b4b4b4;
}

.page h3 {
  height: 20px;
  line-height: 20px;
}

.group {
  margin-bottom: 6px;
  border: 1px solid #d8d8d8;
  border-radius: 2px;
  background: #ededed;
}

.group.normal {
  height: 79px;
  padding: 11px 12px;
}

.group.alt {
  height: 183px;
  padding: 11px 12px;
}

.limit {
  display: flex;
  align-items: center;
  gap: 7px;
}

.limit svg {
  width: 22px;
  height: 22px;
}

.limit-grid {
  display: grid;
  grid-template-columns: 57px 97px;
  gap: 7px 0;
  align-items: center;
}

.spin {
  display: flex;
  width: 97px;
  height: 24px;
  border: 1px solid #b0b0b0;
  border-radius: 2px;
  background: #fff;
}

.spin input {
  flex: 1;
  min-width: 0;
  padding-left: 4px;
}

.spin > span {
  display: flex;
  flex-direction: column;
  width: 15px;
  border-left: 1px solid #b8b8b8;
}

.spin span button {
  flex: 1;
  display: flex;
  align-items: center;
  justify-content: center;
}

.spin span button::before {
  content: "";
  border: 4px solid transparent;
  border-bottom-color: #555;
  border-top: 0;
}

.spin span button + button::before {
  border: 4px solid transparent;
  border-top-color: #555;
  border-bottom: 0;
}

.check {
  display: flex;
  align-items: center;
  gap: 4px;
  height: 18px;
}

.check input {
  position: relative;
  width: 14px;
  height: 14px;
  border: 1px solid #b8b8b8;
  background: #fff;
  appearance: none;
}

.check input:checked::after {
  content: "";
  position: absolute;
  top: 0;
  left: 3px;
  width: 3px;
  height: 7px;
  border: solid #111;
  border-width: 0 2px 2px 0;
  transform: rotate(40deg);
}

.schedule-check {
  margin-top: 6px;
}

.schedule {
  display: flex;
  flex-direction: column;
  gap: 6px;
  height: 79px;
  padding: 12px 10px;
  border: 1px solid #d4d4d4;
  border-radius: 2px;
  background: #e9e9e9;
  color: #8c8c8c;
}

.schedule-row {
  display: flex;
  align-items: center;
}

.schedule-row label {
  width: 40px;
}

.schedule-row .to {
  width: 30px;
  padding-left: 6px;
}

.spin.time {
  width: 54px;
  background: #f0f0f0;
}

.spin.time > span {
  width: 14px;
}

.spin span button:disabled::before {
  opacity: 0.6;
}

.select.when {
  width: 101px;
  height: 24px;
  border-color: #c4c4c4;
}

.select.when::after {
  opacity: 0.6;
}

.options {
  display: flex;
  flex-direction: column;
  gap: 10px;
  height: 101px;
  padding: 13px 11px;
}

.options .check {
  gap: 5px;
}

select:disabled,
input:disabled {
  color: #8c8c8c;
  opacity: 1;
}

.dialog-buttons {
  display: flex;
  justify-content: flex-end;
  gap: 6px;
  padding: 6px 11px 11px;
}

.dialog-buttons button {
  width: 80px;
  height: 24px;
  border: 1px solid #b0b0b0;
  border-radius: 2px;
  background: linear-gradient(#fff, #f3f3f3);
}

.dialog-buttons .default {
  border-color: #47a0e4;
  background: linear-gradient(#fff, #e6eef6);
}

.dialog-buttons button:disabled {
  border-color: #ccc;
  color: #8c8c8c;
}
</style>
